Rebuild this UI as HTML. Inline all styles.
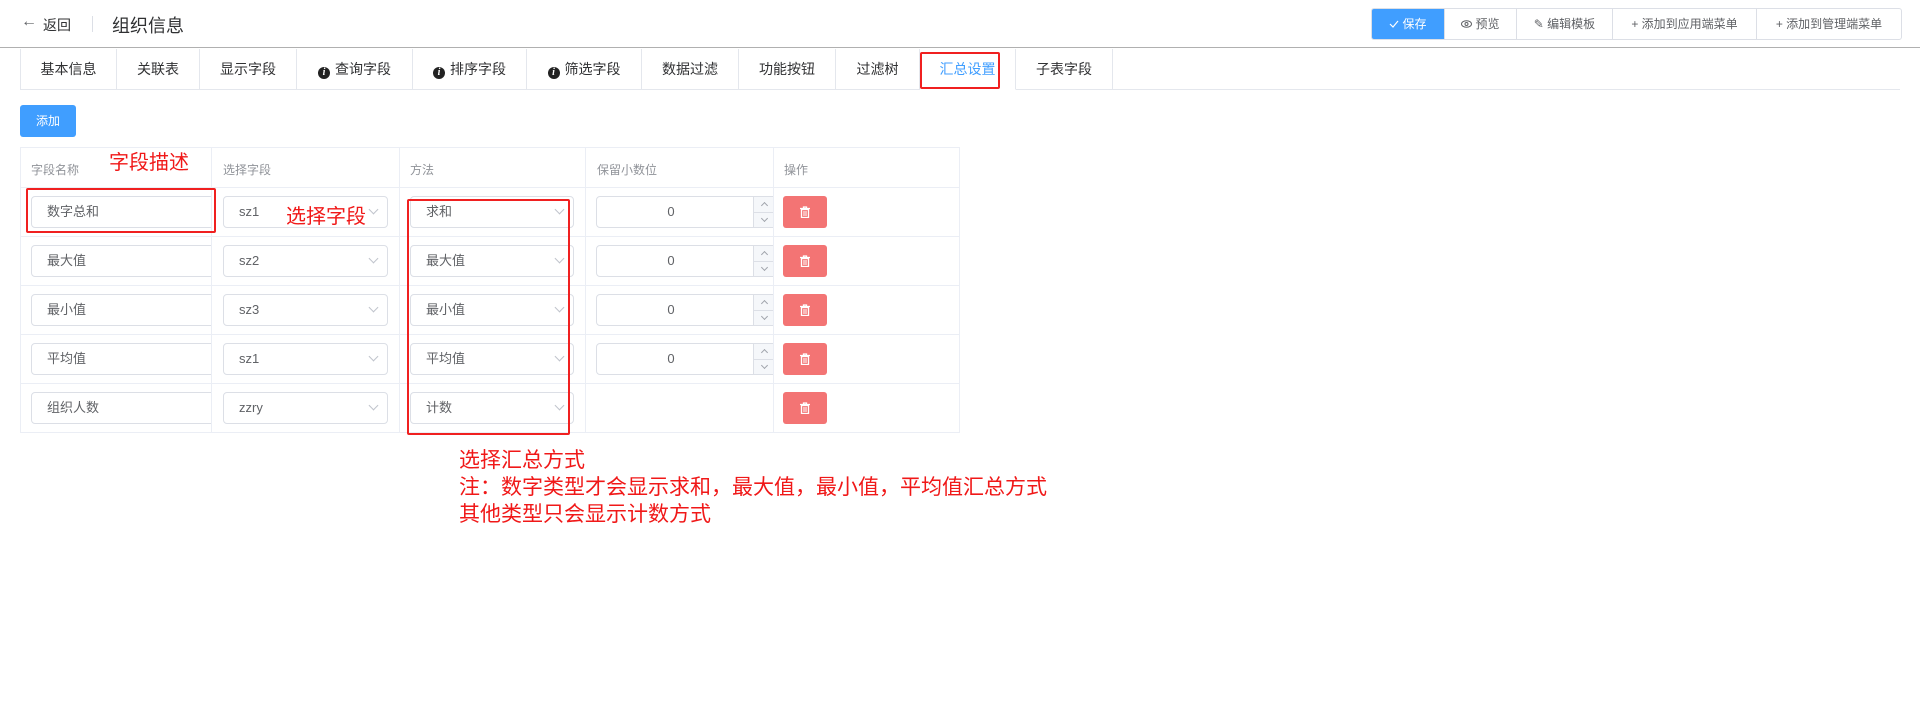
<!DOCTYPE html>
<html><head><meta charset="utf-8"><style>
*{box-sizing:border-box;margin:0;padding:0}
body{width:1920px;height:727px;background:#fff;font-family:"Liberation Sans","Noto Sans CJK SC",sans-serif;color:#303133;position:relative;overflow:hidden}
.a{position:absolute}
.hdr{left:0;top:0;width:1920px;height:48px;border-bottom:1px solid #b0b0b0}
.btns{left:1371px;top:8px;height:32px;display:flex;border:1px solid #dcdfe6;border-radius:3px;overflow:hidden}
.btns div{height:30px;line-height:30px;font-size:12px;color:#606266;text-align:center;border-left:1px solid #dcdfe6}
.tabs{left:20px;top:49px;width:1880px;height:41px;border-bottom:1px solid #e4e7ed}
.tab{position:absolute;top:0;height:40px;line-height:40px;font-size:14px;color:#303133;text-align:center;border-right:1px solid #e4e7ed}
.ic{display:inline-block;width:12px;height:12px;border-radius:50%;background:#222;color:#fff;font-size:10px;line-height:12px;font-style:italic;font-weight:bold;vertical-align:-1px;margin-right:5px;font-family:"Liberation Serif",serif}
.tbl{left:20px;top:147px;width:940px;height:286px;border:1px solid #ebeef5}
.vl{position:absolute;top:0;width:1px;height:284px;background:#ebeef5}
.hl{position:absolute;left:0;width:938px;height:1px;background:#ebeef5}
.th{position:absolute;top:13px;font-size:12px;color:#909399}
.inp{position:absolute;height:32px;border:1px solid #dcdfe6;border-radius:4px;font-size:13px;color:#606266;line-height:30px;padding-left:15px;background:#fff}
.arr{position:absolute;right:10px;top:9px;width:7px;height:7px;border-right:1px solid #c0c4cc;border-bottom:1px solid #c0c4cc;transform:rotate(45deg)}
.del{position:absolute;width:44px;height:32px;background:#f37474;border-radius:3px}
.del svg{position:absolute;left:16px;top:10px}
.red{position:absolute;border:2px solid #f02020;border-radius:2px}
.rt{position:absolute;color:#f01818;font-size:20px;font-family:"Noto Sans CJK SC",sans-serif}
.clip{position:absolute;overflow:hidden}
.st{position:absolute;left:156px;top:0;width:30px;height:30px;background:#f5f7fa;border-left:1px solid #dcdfe6}
.st:before{content:"";position:absolute;left:0;top:15px;width:30px;height:1px;background:#dcdfe6}
.st b,.st em{position:absolute;left:8px;width:5px;height:5px;border-left:1px solid #a0a4ac;border-top:1px solid #a0a4ac}
.st b{top:6px;transform:rotate(45deg)}
.st em{top:19px;transform:rotate(225deg)}
</style></head><body>
<div class="a hdr"></div>
<div class="a" style="left:21px;top:13px;font-size:16px;color:#606266">←</div>
<div class="a" style="left:43px;top:15px;font-size:14px;color:#303133">返回</div>
<div class="a" style="left:92px;top:16px;width:1px;height:16px;background:#dcdfe6"></div>
<div class="a" style="left:112px;top:12px;font-size:18px;color:#303133">组织信息</div>
<div class="a btns">
<div style="width:72px;background:#409eff;color:#fff;border-left:none"><svg width="10" height="8" viewBox="0 0 10 8" style="margin-right:3px"><path d="M1 4 L4 7 L9 1" stroke="#fff" fill="none" stroke-width="1.2"/></svg>保存</div>
<div style="width:72px"><svg width="11" height="8" viewBox="0 0 11 8" style="margin-right:3px"><ellipse cx="5.5" cy="4" rx="5" ry="3.3" stroke="#606266" fill="none"/><circle cx="5.5" cy="4" r="1.5" stroke="#606266" fill="none"/></svg>预览</div>
<div style="width:96px">✎ 编辑模板</div>
<div style="width:144px">+ 添加到应用端菜单</div>
<div style="width:145px">+ 添加到管理端菜单</div>
</div>
<div class="a tabs">
<div class="tab" style="left:0;width:97px;border-left:1px solid #e4e7ed">基本信息</div>
<div class="tab" style="left:97px;width:83px">关联表</div>
<div class="tab" style="left:180px;width:97px">显示字段</div>
<div class="tab" style="left:277px;width:116px"><span class="ic">i</span>查询字段</div>
<div class="tab" style="left:393px;width:114px"><span class="ic">i</span>排序字段</div>
<div class="tab" style="left:507px;width:115px"><span class="ic">i</span>筛选字段</div>
<div class="tab" style="left:622px;width:97px">数据过滤</div>
<div class="tab" style="left:719px;width:97px">功能按钮</div>
<div class="tab" style="left:816px;width:84px">过滤树</div>
<div class="tab" style="left:900px;width:96px;color:#409eff;border-bottom:1px solid #fff;height:41px">汇总设置</div>
<div class="tab" style="left:996px;width:97px">子表字段</div>
</div>
<div class="red" style="left:920px;top:52px;width:80px;height:37px"></div>
<div class="a" style="left:20px;top:105px;width:56px;height:32px;background:#409eff;border-radius:3px;color:#fff;font-size:12px;line-height:32px;text-align:center">添加</div>

<div class="a tbl">
<div class="vl" style="left:190px"></div><div class="vl" style="left:378px"></div><div class="vl" style="left:564px"></div><div class="vl" style="left:752px"></div>
<div class="hl" style="top:39px"></div><div class="hl" style="top:88px"></div><div class="hl" style="top:137px"></div><div class="hl" style="top:186px"></div><div class="hl" style="top:235px"></div>
<div class="th" style="left:10px">字段名称</div><div class="th" style="left:202px">选择字段</div><div class="th" style="left:389px">方法</div><div class="th" style="left:576px">保留小数位</div><div class="th" style="left:763px">操作</div>
</div>

<div class="clip" style="left:21px;top:188px;width:190px;height:245px">
<div class="inp" style="left:10px;top:8px;width:200px">数字总和</div>
<div class="inp" style="left:10px;top:57px;width:200px">最大值</div>
<div class="inp" style="left:10px;top:106px;width:200px">最小值</div>
<div class="inp" style="left:10px;top:155px;width:200px">平均值</div>
<div class="inp" style="left:10px;top:204px;width:200px">组织人数</div>
</div>
<div class="inp" style="left:223px;top:196px;width:165px">sz1<span class="arr"></span></div>
<div class="inp" style="left:223px;top:245px;width:165px">sz2<span class="arr"></span></div>
<div class="inp" style="left:223px;top:294px;width:165px">sz3<span class="arr"></span></div>
<div class="inp" style="left:223px;top:343px;width:165px">sz1<span class="arr"></span></div>
<div class="inp" style="left:223px;top:392px;width:165px">zzry<span class="arr"></span></div>
<div class="inp" style="left:410px;top:196px;width:164px">求和<span class="arr"></span></div>
<div class="inp" style="left:410px;top:245px;width:164px">最大值<span class="arr"></span></div>
<div class="inp" style="left:410px;top:294px;width:164px">最小值<span class="arr"></span></div>
<div class="inp" style="left:410px;top:343px;width:164px">平均值<span class="arr"></span></div>
<div class="inp" style="left:410px;top:392px;width:164px">计数<span class="arr"></span></div>

<div class="clip" style="left:585px;top:188px;width:188px;height:200px">
<div class="inp" style="left:11px;top:8px;width:200px;padding:0 50px 0 0;text-align:center">0<span class="st"><b></b><em></em></span></div>
<div class="inp" style="left:11px;top:57px;width:200px;padding:0 50px 0 0;text-align:center">0<span class="st"><b></b><em></em></span></div>
<div class="inp" style="left:11px;top:106px;width:200px;padding:0 50px 0 0;text-align:center">0<span class="st"><b></b><em></em></span></div>
<div class="inp" style="left:11px;top:155px;width:200px;padding:0 50px 0 0;text-align:center">0<span class="st"><b></b><em></em></span></div>
</div>

<div class="del" style="left:783px;top:196px"><svg width="12" height="12" viewBox="0 0 12 12"><path d="M1 2.5H11M4.5 2.5V1H7.5V2.5M2.5 3.5H9.5V11.5H2.5Z" stroke="#fff" fill="none" stroke-width="1.3"/><path d="M5 5V10M7 5V10" stroke="#fff"/></svg></div>
<div class="del" style="left:783px;top:245px"><svg width="12" height="12" viewBox="0 0 12 12"><path d="M1 2.5H11M4.5 2.5V1H7.5V2.5M2.5 3.5H9.5V11.5H2.5Z" stroke="#fff" fill="none" stroke-width="1.3"/><path d="M5 5V10M7 5V10" stroke="#fff"/></svg></div>
<div class="del" style="left:783px;top:294px"><svg width="12" height="12" viewBox="0 0 12 12"><path d="M1 2.5H11M4.5 2.5V1H7.5V2.5M2.5 3.5H9.5V11.5H2.5Z" stroke="#fff" fill="none" stroke-width="1.3"/><path d="M5 5V10M7 5V10" stroke="#fff"/></svg></div>
<div class="del" style="left:783px;top:343px"><svg width="12" height="12" viewBox="0 0 12 12"><path d="M1 2.5H11M4.5 2.5V1H7.5V2.5M2.5 3.5H9.5V11.5H2.5Z" stroke="#fff" fill="none" stroke-width="1.3"/><path d="M5 5V10M7 5V10" stroke="#fff"/></svg></div>
<div class="del" style="left:783px;top:392px"><svg width="12" height="12" viewBox="0 0 12 12"><path d="M1 2.5H11M4.5 2.5V1H7.5V2.5M2.5 3.5H9.5V11.5H2.5Z" stroke="#fff" fill="none" stroke-width="1.3"/><path d="M5 5V10M7 5V10" stroke="#fff"/></svg></div>

<div class="red" style="left:26px;top:188px;width:190px;height:45px"></div>
<div class="red" style="left:407px;top:199px;width:163px;height:236px"></div>
<div class="rt" style="left:109px;top:147px;line-height:28px">字段描述</div>
<div class="rt" style="left:286px;top:201px;line-height:28px">选择字段</div>
<div class="rt" style="left:459px;top:446px;line-height:27px;font-size:21px">选择汇总方式<br>注：数字类型才会显示求和，最大值，最小值，平均值汇总方式<br>其他类型只会显示计数方式</div>
</body></html>
